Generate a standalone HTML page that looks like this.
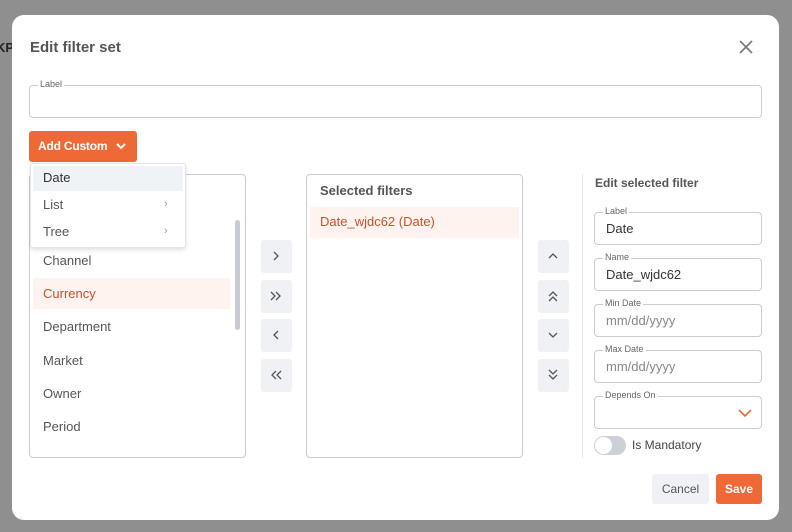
<!DOCTYPE html>
<html><head><meta charset="utf-8"><style>
*{box-sizing:border-box;margin:0;padding:0}
body{width:792px;height:532px;background:#8f8f8f;font-family:"Liberation Sans",sans-serif;position:relative;overflow:hidden;color:#444}
.a{position:absolute}
.modal{left:12px;top:15px;width:767px;height:505px;background:#fff;border-radius:12px}
.fs{position:absolute;border:1px solid #c9ccd3;border-radius:4px;background:#fff}
.lg{position:absolute;top:-7px;left:8px;background:#fff;padding:0 2px;font-size:9px;color:#666}
.val{position:absolute;left:11px;top:8px;font-size:13px;color:#333}
.ph{color:#888}
.btn{position:absolute;width:31px;height:33px;background:#eff1f4;border-radius:3px}
.btn svg{position:absolute;left:9px;top:10px}
.it{position:absolute;left:13px;font-size:13px;color:#555}
</style></head><body>
<div class="a" style="left:-4px;top:40px;font-size:13px;font-weight:bold;color:#222">KP.</div>
<div class="a modal"></div>
<div class="a" style="left:30px;top:39px;font-size:15px;font-weight:bold;color:#555">Edit filter set</div>
<svg class="a" style="left:739px;top:40px" width="14" height="14" viewBox="0 0 14 14"><path d="M1 1L13 13M13 1L1 13" stroke="#777" stroke-width="1.6"/></svg>
<div class="fs" style="left:29px;top:85px;width:733px;height:33px"><span class="lg">Label</span></div>
<div class="a" style="left:29px;top:131px;width:108px;height:31px;background:#ee6935;border-radius:3px;color:#fff;font-size:12px;font-weight:bold;padding:8px 0 0 9px;letter-spacing:-0.2px">Add Custom
<svg style="position:absolute;left:87px;top:12px" width="10" height="7" viewBox="0 0 10 7"><path d="M1 1L5 5L9 1" stroke="#fff" stroke-width="2" fill="none"/></svg></div>
<div class="fs" style="left:29px;top:174px;width:217px;height:284px"></div>
<div class="a" style="left:235px;top:220px;width:5px;height:110px;background:#c8cbd1;border-radius:3px"></div>
<div class="a" style="left:33px;top:278px;width:197px;height:31px;background:#fff3f0"></div>
<div class="it" style="left:43px;top:253px">Channel</div>
<div class="it" style="left:43px;top:286px;color:#c0532c">Currency</div>
<div class="it" style="left:43px;top:319px">Department</div>
<div class="it" style="left:43px;top:353px">Market</div>
<div class="it" style="left:43px;top:386px">Owner</div>
<div class="it" style="left:43px;top:419px">Period</div>
<div class="a" style="left:30px;top:163px;width:156px;height:85px;background:#fff;border:1px solid #e3e5e9;border-radius:3px;box-shadow:0 2px 4px rgba(0,0,0,.12)"></div>
<div class="a" style="left:33px;top:166px;width:150px;height:25px;background:#eff2f6"></div>
<div class="it" style="left:43px;top:170px;color:#333">Date</div>
<div class="it" style="left:43px;top:197px">List</div>
<div class="it" style="left:43px;top:224px">Tree</div>
<div class="a" style="left:164px;top:198px;font-size:11px;color:#999">›</div>
<div class="a" style="left:164px;top:225px;font-size:11px;color:#999">›</div>
<div class="btn" style="left:261px;top:240px"><svg width="12" height="12" viewBox="0 0 12 12"><path d="M4 2L8 6L4 10" stroke="#555" stroke-width="1.3" fill="none"/></svg></div>
<div class="btn" style="left:261px;top:280px"><svg width="12" height="12" viewBox="0 0 12 12"><path d="M1 2L5 6L1 10M6 2L10 6L6 10" stroke="#555" stroke-width="1.3" fill="none"/></svg></div>
<div class="btn" style="left:261px;top:319px"><svg width="12" height="12" viewBox="0 0 12 12"><path d="M8 2L4 6L8 10" stroke="#555" stroke-width="1.3" fill="none"/></svg></div>
<div class="btn" style="left:261px;top:359px"><svg width="12" height="12" viewBox="0 0 12 12"><path d="M6 2L2 6L6 10M11 2L7 6L11 10" stroke="#555" stroke-width="1.3" fill="none"/></svg></div>
<div class="fs" style="left:306px;top:174px;width:217px;height:284px"></div>
<div class="a" style="left:320px;top:183px;font-size:13px;font-weight:bold;color:#555">Selected filters</div>
<div class="a" style="left:310px;top:207px;width:209px;height:31px;background:#fff3f0"></div>
<div class="it" style="left:320px;top:214px;color:#c0532c">Date_wjdc62 (Date)</div>
<div class="btn" style="left:538px;top:240px"><svg width="12" height="12" viewBox="0 0 12 12"><path d="M2 8L6 4L10 8" stroke="#555" stroke-width="1.3" fill="none"/></svg></div>
<div class="btn" style="left:538px;top:280px"><svg width="12" height="12" viewBox="0 0 12 12"><path d="M2 6L6 2L10 6M2 11L6 7L10 11" stroke="#555" stroke-width="1.3" fill="none"/></svg></div>
<div class="btn" style="left:538px;top:319px"><svg width="12" height="12" viewBox="0 0 12 12"><path d="M2 4L6 8L10 4" stroke="#555" stroke-width="1.3" fill="none"/></svg></div>
<div class="btn" style="left:538px;top:359px"><svg width="12" height="12" viewBox="0 0 12 12"><path d="M2 1L6 5L10 1M2 6L6 10L10 6" stroke="#555" stroke-width="1.3" fill="none"/></svg></div>
<div class="a" style="left:582px;top:174px;width:1px;height:284px;background:#e6e8ec"></div>
<div class="a" style="left:595px;top:176px;font-size:12px;font-weight:bold;color:#555">Edit selected filter</div>
<div class="fs" style="left:594px;top:212px;width:168px;height:33px"><span class="lg">Label</span><span class="val">Date</span></div>
<div class="fs" style="left:594px;top:258px;width:168px;height:33px"><span class="lg">Name</span><span class="val">Date_wjdc62</span></div>
<div class="fs" style="left:594px;top:304px;width:168px;height:33px"><span class="lg">Min Date</span><span class="val ph">mm/dd/yyyy</span></div>
<div class="fs" style="left:594px;top:350px;width:168px;height:33px"><span class="lg">Max Date</span><span class="val ph">mm/dd/yyyy</span></div>
<div class="fs" style="left:594px;top:396px;width:168px;height:33px"><span class="lg">Depends On</span>
<svg style="position:absolute;left:143px;top:12px" width="14" height="9" viewBox="0 0 14 9"><path d="M1 1L7 7L13 1" stroke="#ee6935" stroke-width="1.6" fill="none"/></svg></div>
<div class="a" style="left:594px;top:436px;width:32px;height:19px;background:#cdd0d6;border-radius:10px"><div style="position:absolute;left:1px;top:1px;width:17px;height:17px;background:#fff;border-radius:50%"></div></div>
<div class="a" style="left:632px;top:438px;font-size:12px;color:#444">Is Mandatory</div>
<div class="a" style="left:652px;top:474px;width:57px;height:30px;background:#eff1f4;border-radius:3px;font-size:12px;color:#555;text-align:center;line-height:30px">Cancel</div>
<div class="a" style="left:716px;top:474px;width:46px;height:30px;background:#ee6935;border-radius:3px;font-size:12px;color:#fff;font-weight:bold;text-align:center;line-height:30px">Save</div>
</body></html>
